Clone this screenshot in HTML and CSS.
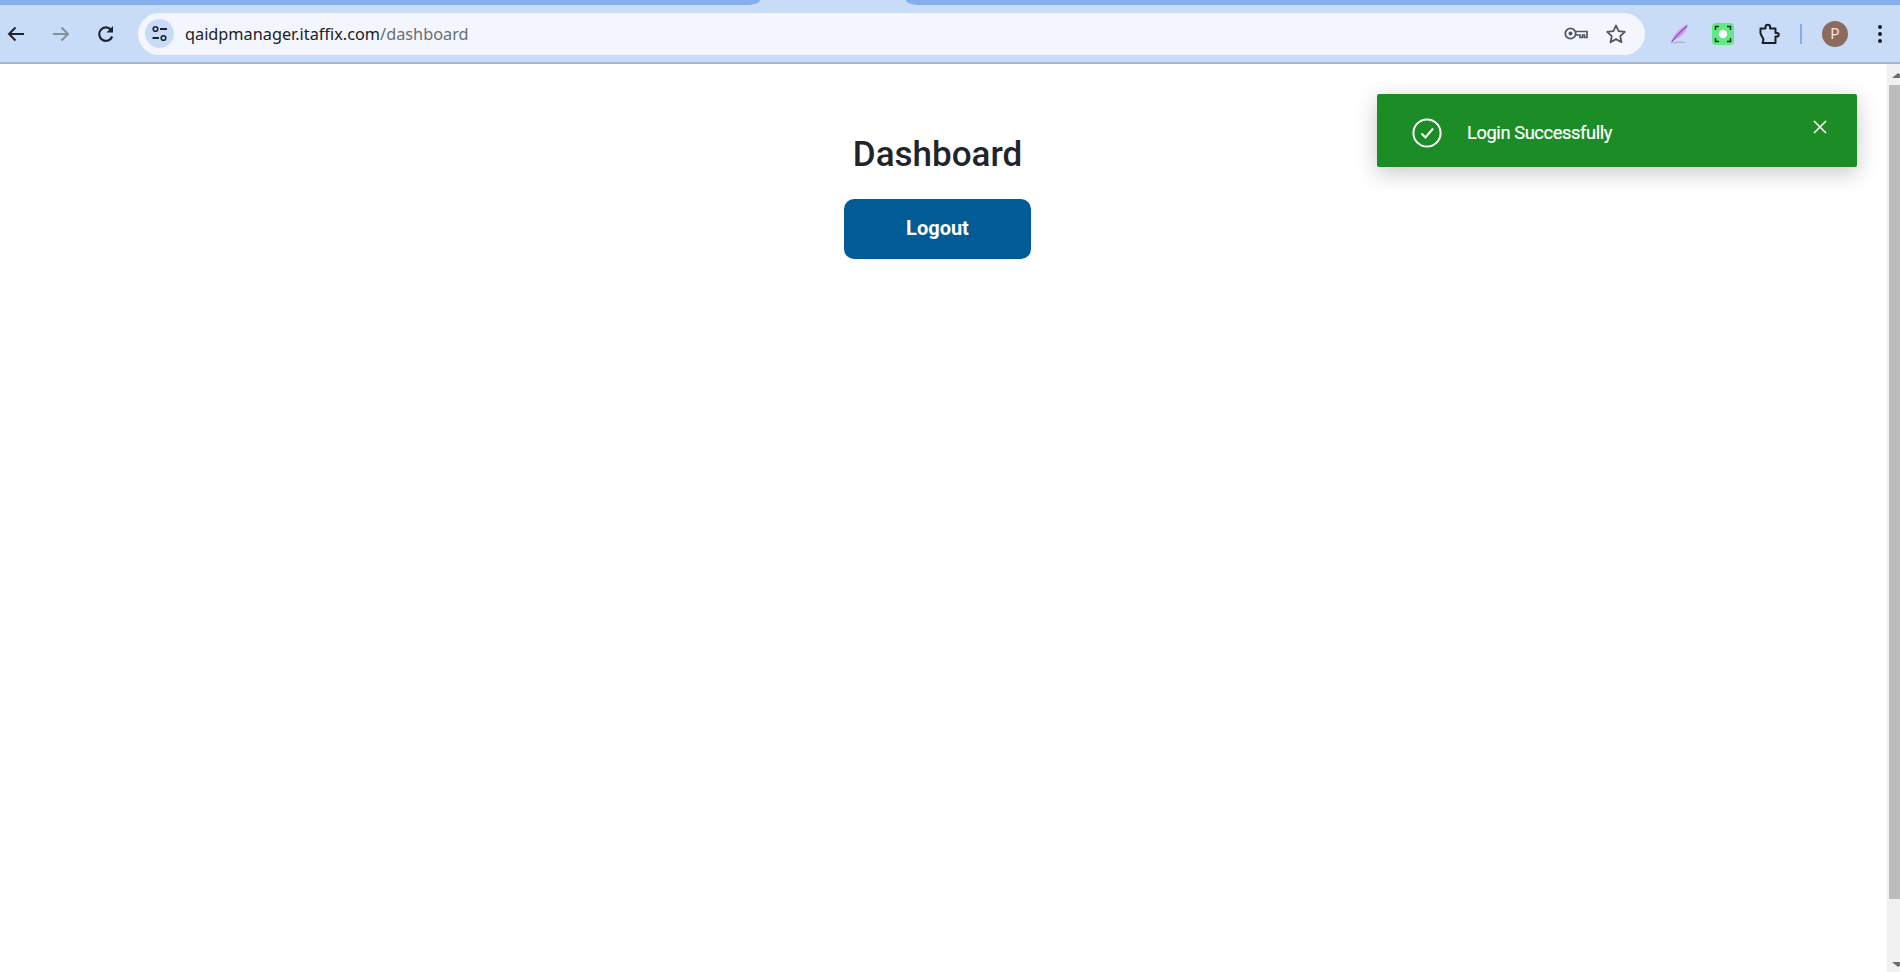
FILE: index.html
```html
<!DOCTYPE html>
<html lang="en">
<head>
<meta charset="utf-8">
<title>Dashboard</title>
<link rel="stylesheet" href="styles.css">
</head>
<body>
<div class="tabstrip">
  <div class="tab tab-left"></div>
  <div class="tab-gap"></div>
  <div class="tab tab-right"></div>
</div>
<header class="toolbar">
  <div class="nav">
    <button class="nav-btn" aria-label="Back"><svg viewBox="0 0 24 24" width="24" height="24"><path d="M20 12H5.500M11.500 5.500 5 12l6.500 6.500" fill="none" stroke="#20242a" stroke-width="2"/></svg></button>
    <button class="nav-btn" aria-label="Forward"><svg viewBox="0 0 24 24" width="24" height="24"><path d="M4 12h14.500M12.500 5.500 19 12l-6.500 6.500" fill="none" stroke="#878f9d" stroke-width="2"/></svg></button>
    <button class="nav-btn" aria-label="Reload"><svg viewBox="0 0 24 24" width="24" height="24"><path d="M18.200 14.500A6.700 6.700 0 1 1 17 7.800" fill="none" stroke="#20242a" stroke-width="2.200"/><path d="M19 4V10.500h-6.500z" fill="#20242a"/></svg></button>
  </div>
  <div class="omnibox">
    <span class="site-chip"><svg viewBox="0 0 20 20" width="20" height="20"><circle cx="5.500" cy="5" r="2.300" fill="none" stroke="#20242a" stroke-width="1.600"/><path d="M10 5h7M2.500 14H9" stroke="#20242a" stroke-width="1.800" fill="none"/><circle cx="13.500" cy="14" r="2.300" fill="none" stroke="#20242a" stroke-width="1.600"/></svg></span>
    <span class="url"><span class="url-host">qaidpmanager.itaffix.com</span><span class="url-path">/dashboard</span></span>
    <span class="omni-icons">
      <svg viewBox="0 0 24 24" width="24" height="24"><circle cx="6.500" cy="11.500" r="5.200" fill="none" stroke="#53585f" stroke-width="1.800"/><circle cx="6.500" cy="11.500" r="2" fill="#53585f"/><path d="M11.700 9.500H23v6h-2.500v-2.500h-2v2.500h-2.500V13h-4.500" fill="none" stroke="#53585f" stroke-width="1.700"/></svg>
      <svg viewBox="0 0 24 24" width="24" height="24"><path d="m12 3.500 2.600 5.700 6.200.7-4.600 4.200 1.300 6.100L12 17.100l-5.500 3.100 1.300-6.100-4.600-4.200 6.200-.7z" fill="none" stroke="#50555c" stroke-width="1.800" stroke-linejoin="round"/></svg>
    </span>
  </div>
  <div class="extensions">
    <svg class="ext-quill" viewBox="0 0 24 24" width="24" height="24"><path d="M3 20C6 12 12 6 20 2c-1 7-6 13-14 16z" fill="#cf9ce8"/><path d="M3.500 20.500C8 14 13 9 19 4" stroke="#9a45c6" stroke-width="1.100" fill="none"/><path d="M5 21.500c4-1.500 8-1.500 12-1" stroke="#a9adb8" stroke-width="1.200" fill="none"/></svg>
    <svg class="ext-shot" viewBox="0 0 22 22" width="22" height="22"><rect width="22" height="22" rx="4" fill="#64e886"/><path d="M3.500 7V3.500H7M15 3.500h3.500V7M18.500 15v3.500H15M7 18.500H3.500V15" fill="none" stroke="#10301c" stroke-width="1.500"/><circle cx="11" cy="11" r="4.200" fill="#fff"/></svg>
    <svg class="ext-puzzle" viewBox="0 0 24 24" width="24" height="24"><path d="M3.500 6.500H8.500V5a2.300 2.300 0 0 1 4.600 0v1.500h5.400v4.500h1.500a1.800 1.800 0 0 1 0 3.600h-1.500V21H5.500l1-3.500-3-6z" fill="none" stroke="#1b1f25" stroke-width="2" stroke-linejoin="round"/></svg>
    <span class="divider"></span>
    <span class="avatar">P</span>
    <svg class="kebab" viewBox="0 0 6 20" width="6" height="20"><circle cx="3" cy="3" r="2" fill="#1b1f25"/><circle cx="3" cy="10" r="2" fill="#1b1f25"/><circle cx="3" cy="17" r="2" fill="#1b1f25"/></svg>
  </div>
</header>
<div class="viewport">
  <main class="page">
    <h1 class="title">Dashboard</h1>
    <button class="logout">Logout</button>
  </main>
  <div class="scrollbar">
    <span class="arrow-up"></span>
    <span class="thumb"></span>
    <span class="arrow-down"></span>
  </div>
  <div class="toast" role="status">
    <svg class="toast-check" viewBox="0 0 30 30" width="30" height="30"><circle cx="15" cy="15" r="13.600" fill="none" stroke="#fff" stroke-width="2"/><path d="m9.500 15.500 4 4 7.500-9" fill="none" stroke="#fff" stroke-width="2"/></svg>
    <span class="toast-text">Login Successfully</span>
    <svg class="toast-close" viewBox="0 0 14 14" width="14" height="14"><path d="m1 1 12 12M13 1 1 13" stroke="#fff" stroke-width="1.600" fill="none"/></svg>
  </div>
</div>
</body>
</html>
```
FILE: styles.css
```css
* { box-sizing: border-box; }
html, body { margin: 0; height: 100%; overflow: hidden; background: #fff; }
body { display: flex; flex-direction: column; font-family: Roboto, "Liberation Sans", sans-serif; }

.tabstrip { display: flex; height: 5px; background: #c9dcf7; flex: none; }
.tab { background: #85aeea; }
.tab-left { width: 760px; border-bottom-right-radius: 12px 5px; }
.tab-gap { width: 146px; }
.tab-right { flex: 1; border-bottom-left-radius: 12px 5px; }

.toolbar { display: flex; align-items: center; height: 59px; flex: none; background: #c9dcf7; border-bottom: 2px solid #a5b4cb; }
.nav { display: flex; width: 138px; padding-left: 4px; gap: 21px; }
.nav-btn { width: 24px; height: 24px; padding: 0; border: 0; background: none; display: flex; }

.omnibox { display: flex; align-items: center; width: 1507px; height: 42px; border-radius: 21px; background: #f3f7fd; padding: 0 17px 0 7px; }
.site-chip { width: 29px; height: 29px; border-radius: 50%; background: #c9dcf7; display: flex; align-items: center; justify-content: center; flex: none; }
.url { margin-left: 11px; font-family: "Noto Sans", "Open Sans", sans-serif; font-size: 16.300px; white-space: nowrap; }
.url-host { color: #1c2026; }
.url-path { color: #676c75; }
.omni-icons { display: flex; gap: 16px; margin-left: auto; }

.extensions { display: flex; align-items: center; flex: 1; }
.ext-quill { margin-left: 23px; }
.ext-shot { margin-left: 20px; }
.ext-puzzle { margin-left: 23px; }
.divider { width: 2px; height: 20px; background: #85aeea; margin-left: 19px; }
.avatar { width: 26px; height: 26px; margin-left: 20px; border-radius: 50%; background: #8d6b5c; color: #f4e9e4; font-size: 14px; display: flex; align-items: center; justify-content: center; }
.kebab { margin-left: 29px; }

.viewport { position: relative; display: flex; flex: 1; min-height: 0; }
.page { width: 1875px; flex: none; display: flex; flex-direction: column; align-items: center; padding-top: 66px; margin-right: 12px; }
.title { margin: 0; font-size: 35px; line-height: 50px; font-weight: 500; color: #212529; }
.logout { margin-top: 19px; width: 187px; height: 60px; padding: 0 0 3px; border: 0; border-radius: 10px; background: #005b96; color: #fff; font-family: Roboto, sans-serif; font-size: 20px; font-weight: 700; }

.scrollbar { position: absolute; top: 0; right: 0; bottom: 0; width: 13px; overflow: hidden; background: #f1f1f1; display: flex; flex-direction: column; padding-left: 2px; }
.thumb { width: 11px; margin-top: 7px; height: 814px; background: #bcbcbc; flex: none; }
.arrow-up { align-self: flex-end; margin: 9px -4px 0 0; border: 6px solid transparent; border-top: 0; border-bottom: 5px solid #6c6c6c; }
.arrow-down { align-self: flex-end; margin: auto -4px 5px 0; border: 6px solid transparent; border-bottom: 0; border-top: 5px solid #6c6c6c; }

.toast { position: absolute; top: 30px; left: 1377px; width: 480px; height: 73px; display: flex; align-items: center; padding: 0 30px 0 35px; background: #1c8c27; border-radius: 2px; box-shadow: 0 6px 22px rgba(0, 0, 0, .22); }
.toast-check { flex: none; margin-top: 4px; }
.toast-text { margin: 4px 0 0 25px; color: #fff; font-size: 18.300px; -webkit-text-stroke: .2px #fff; letter-spacing: -.4px; }
.toast-close { margin-left: auto; margin-top: -7px; }
```
